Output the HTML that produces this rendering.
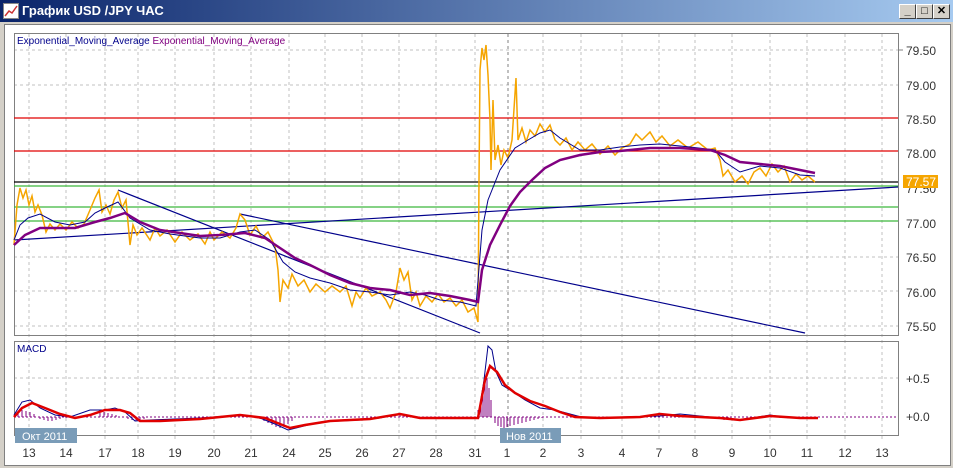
<!DOCTYPE html>
<html><head><meta charset="utf-8"><style>
html,body{margin:0;padding:0;width:953px;height:468px;overflow:hidden;background:#d4d0c8;font-family:"Liberation Sans",sans-serif}
.title{position:absolute;left:0;top:0;width:953px;height:22px;background:linear-gradient(to right,#0a246a,#a6caf0);}
.title span{position:absolute;left:22px;top:3px;color:#fff;font-weight:bold;font-size:13px}
.btn{position:absolute;top:4px;width:15px;height:13px;background:#d4d0c8;border:1px solid;border-color:#fff #404040 #404040 #fff;font-size:11px;font-weight:bold;text-align:center;line-height:13px}
.win{position:absolute;left:4px;top:24px;width:945px;height:440px;background:#fff;border:1px solid #808080}
svg text{font-family:"Liberation Sans",sans-serif}
</style></head><body>
<div class="title"><svg style="position:absolute;left:3px;top:3px" width="16" height="16"><rect x="0.5" y="0.5" width="15" height="15" fill="#fff" stroke="#888"/><polyline points="2,13 6,8 9,10 14,3" fill="none" stroke="#c33" stroke-width="1.5"/></svg><span>График USD /JPY ЧАС</span></div>
<div class="btn" style="left:899px">_</div><div class="btn" style="left:916px">□</div><div class="btn" style="left:933px">✕</div>
<div class="win"></div>
<svg style="position:absolute;left:0;top:0" width="953" height="468">
<g stroke="#c0c0c0" stroke-dasharray="3,3" stroke-width="1">
<line x1="29" y1="34" x2="29" y2="440"/><line x1="66" y1="34" x2="66" y2="440"/><line x1="105" y1="34" x2="105" y2="440"/><line x1="138" y1="34" x2="138" y2="440"/><line x1="175" y1="34" x2="175" y2="440"/><line x1="214" y1="34" x2="214" y2="440"/><line x1="251" y1="34" x2="251" y2="440"/><line x1="289" y1="34" x2="289" y2="440"/><line x1="325" y1="34" x2="325" y2="440"/><line x1="362" y1="34" x2="362" y2="440"/><line x1="399" y1="34" x2="399" y2="440"/><line x1="436" y1="34" x2="436" y2="440"/><line x1="475" y1="34" x2="475" y2="440"/><line x1="543" y1="34" x2="543" y2="440"/><line x1="581" y1="34" x2="581" y2="440"/><line x1="622" y1="34" x2="622" y2="440"/><line x1="659" y1="34" x2="659" y2="440"/><line x1="695" y1="34" x2="695" y2="440"/><line x1="732" y1="34" x2="732" y2="440"/><line x1="770" y1="34" x2="770" y2="440"/><line x1="807" y1="34" x2="807" y2="440"/><line x1="845" y1="34" x2="845" y2="440"/><line x1="882" y1="34" x2="882" y2="440"/>
<line x1="14" y1="50" x2="898" y2="50"/><line x1="14" y1="85" x2="898" y2="85"/><line x1="14" y1="257" x2="898" y2="257"/><line x1="14" y1="291" x2="898" y2="291"/><line x1="14" y1="326" x2="898" y2="326"/><line x1="14" y1="378" x2="898" y2="378"/>
</g>
<line x1="508" y1="34" x2="508" y2="440" stroke="#808080" stroke-dasharray="3,3"/>
<line x1="14" y1="417" x2="898" y2="417" stroke="#800080" stroke-dasharray="2,2"/>
<rect x="14.5" y="33.5" width="884" height="302" fill="none" stroke="#808080"/>
<rect x="14.5" y="341.5" width="884" height="94" fill="none" stroke="#808080"/>
<g stroke-width="1.2">
<line x1="14" y1="118" x2="898" y2="118" stroke="#e00000"/><line x1="14" y1="151" x2="898" y2="151" stroke="#e00000"/>
<line x1="14" y1="182" x2="898" y2="182" stroke="#000"/>
<line x1="14" y1="186" x2="898" y2="186" stroke="#3cb83c"/><line x1="14" y1="207" x2="898" y2="207" stroke="#3cb83c"/><line x1="14" y1="221" x2="898" y2="221" stroke="#3cb83c"/>
<line x1="14" y1="240" x2="898" y2="187" stroke="#00008b"/><line x1="118" y1="190" x2="480" y2="333" stroke="#00008b"/><line x1="240" y1="214" x2="805" y2="333" stroke="#00008b"/>
</g>
<polyline fill="none" stroke="#f5a500" stroke-width="1.5" points="14,245 17,205 20,188 23,198 26,190 29,205 32,196 35,212 38,205 42,215 46,232 50,224 55,230 60,224 66,230 72,222 78,228 84,224 90,210 95,198 99,190 102,212 106,205 110,214 114,200 118,192 122,208 126,200 130,245 133,225 137,235 142,228 150,240 155,228 160,236 167,230 175,242 182,232 190,240 198,234 205,244 210,232 214,240 222,232 230,238 236,228 240,214 245,220 250,235 256,226 262,238 268,232 275,246 278,270 280,302 283,280 288,288 292,274 298,286 304,280 310,292 316,284 325,292 332,286 340,292 346,286 352,306 356,292 360,298 366,288 372,296 380,292 386,300 390,308 396,292 400,268 404,280 408,272 412,300 416,292 420,306 426,296 432,302 438,294 444,302 450,298 456,306 462,300 468,312 474,308 478,322 479,180 480,70 482,48 484,60 486,45 488,75 490,120 491,170 493,100 495,160 498,145 501,165 504,150 508,158 512,140 516,78 518,140 522,128 526,142 530,130 535,136 540,124 545,132 550,125 555,140 560,145 566,138 572,150 578,142 585,150 592,144 600,154 608,146 615,155 622,148 630,144 636,134 642,140 650,132 656,142 662,136 670,146 678,140 688,148 698,142 708,150 715,148 720,160 723,176 728,170 735,182 742,176 748,184 754,172 760,168 766,176 772,164 778,172 784,166 790,182 796,174 802,180 808,176 815,182"/>
<polyline fill="none" stroke="#00008b" stroke-width="1" points="14,240 20,225 28,218 40,214 55,222 70,225 85,222 95,213 105,208 118,202 130,218 150,230 170,234 200,238 220,238 240,232 255,230 270,240 283,262 295,272 310,278 330,283 350,290 370,292 390,295 410,292 425,295 440,300 460,302 476,306 482,230 488,200 500,170 515,148 528,140 540,133 550,130 560,138 580,150 600,150 620,147 640,145 660,144 690,147 715,150 725,162 740,172 760,166 780,168 800,175 815,176"/>
<polyline fill="none" stroke="#800080" stroke-width="2.5" points="14,245 25,235 40,228 55,228 75,228 95,222 110,218 125,213 140,222 160,230 180,233 200,236 220,235 245,233 265,238 280,248 295,258 310,265 330,275 350,283 370,288 390,290 410,295 430,293 450,296 470,300 478,302 482,270 490,245 500,225 510,206 520,192 532,180 545,168 560,160 580,155 600,152 620,151 650,148 680,148 710,150 725,155 740,162 760,164 780,166 800,170 815,173"/>
<g stroke="#800080" stroke-width="1">
<path d="M18,417V411 M22,417V410 M26,417V411 M30,417V412 M34,417V414 M40,417V419 M44,417V420 M48,417V421 M52,417V421 M56,417V420 M60,417V419 M66,417V418 M100,417V413 M104,417V412 M108,417V413 M112,417V414 M116,417V415 M128,417V419 M132,417V420 M136,417V421 M140,417V420 M144,417V419 M260,417V419 M264,417V421 M268,417V423 M272,417V425 M276,417V427 M280,417V428 M284,417V427 M288,417V424 M292,417V421 M400,417V415 M404,417V416 M478,417V410 M481,417V398 M483,417V386 M485,417V380 M487,417V378 M489,417V388 M491,417V400 M495,417V423 M498,417V426 M501,417V427 M504,417V428 M507,417V427 M510,417V426 M514,417V425 M518,417V424 M522,417V423 M526,417V422 M530,417V421 M534,417V420 M538,417V419 M542,417V418 M720,417V419 M724,417V420 M728,417V419 M780,417V418"/>
</g>
<polyline fill="none" stroke="#00008b" stroke-width="1" points="14,415 22,402 30,400 40,408 55,415 70,417 90,410 105,410 115,408 125,412 135,421 150,420 200,418 240,415 260,418 275,424 288,430 300,427 320,422 360,420 380,418 400,414 420,418 460,418 478,418 484,380 488,346 492,350 496,372 502,385 510,390 525,400 540,408 555,410 570,414 585,418 660,416 680,414 700,416 720,418 740,420 770,415 790,418 818,418"/>
<polyline fill="none" stroke="#e00000" stroke-width="2.5" points="14,417 22,408 32,403 45,408 60,414 75,418 90,415 105,410 120,410 130,413 140,421 160,421 200,419 240,415 265,418 280,424 290,428 305,425 330,421 370,419 400,414 420,418 460,418 478,418 485,380 490,366 497,372 505,385 515,393 530,401 545,406 560,412 575,417 600,418 640,417 660,414 680,416 720,418 740,420 770,416 800,418 818,418"/>
<line x1="898" y1="50" x2="903" y2="50" stroke="#808080"/>
<g font-size="12" fill="#333">
<text x="906" y="55">79.50</text><text x="906" y="90">79.00</text><text x="906" y="124">78.50</text><text x="906" y="158">78.00</text><text x="906" y="193">77.50</text><text x="906" y="228">77.00</text><text x="906" y="262">76.50</text><text x="906" y="297">76.00</text><text x="906" y="331">75.50</text>
<text x="906" y="383">+0.5</text><text x="906" y="421">+0.0</text>
</g>
<rect x="903" y="175" width="35" height="13" fill="#f5a500"/><text x="906" y="186" font-size="12" fill="#fff">77.57</text>
<text x="17" y="44" font-size="10" fill="#00008b">Exponential_Moving_Average <tspan fill="#800080">Exponential_Moving_Average</tspan></text>
<text x="17" y="352" font-size="10" fill="#00008b">MACD</text>
<rect x="15" y="428" width="62" height="15" fill="#7a9cb8"/><text x="22" y="440" font-size="11" fill="#fff">Окт 2011</text>
<rect x="500" y="428" width="61" height="15" fill="#7a9cb8"/><text x="506" y="440" font-size="11" fill="#fff">Нов 2011</text>
<g font-size="12" fill="#333" text-anchor="middle">
<text x="29" y="457">13</text><text x="66" y="457">14</text><text x="105" y="457">17</text><text x="138" y="457">18</text><text x="175" y="457">19</text><text x="214" y="457">20</text><text x="251" y="457">21</text><text x="289" y="457">24</text><text x="325" y="457">25</text><text x="362" y="457">26</text><text x="399" y="457">27</text><text x="436" y="457">28</text><text x="475" y="457">31</text><text x="507" y="457">1</text><text x="543" y="457">2</text><text x="581" y="457">3</text><text x="622" y="457">4</text><text x="659" y="457">7</text><text x="695" y="457">8</text><text x="732" y="457">9</text><text x="770" y="457">10</text><text x="807" y="457">11</text><text x="845" y="457">12</text><text x="882" y="457">13</text>
</g>
</svg>
</body></html>
